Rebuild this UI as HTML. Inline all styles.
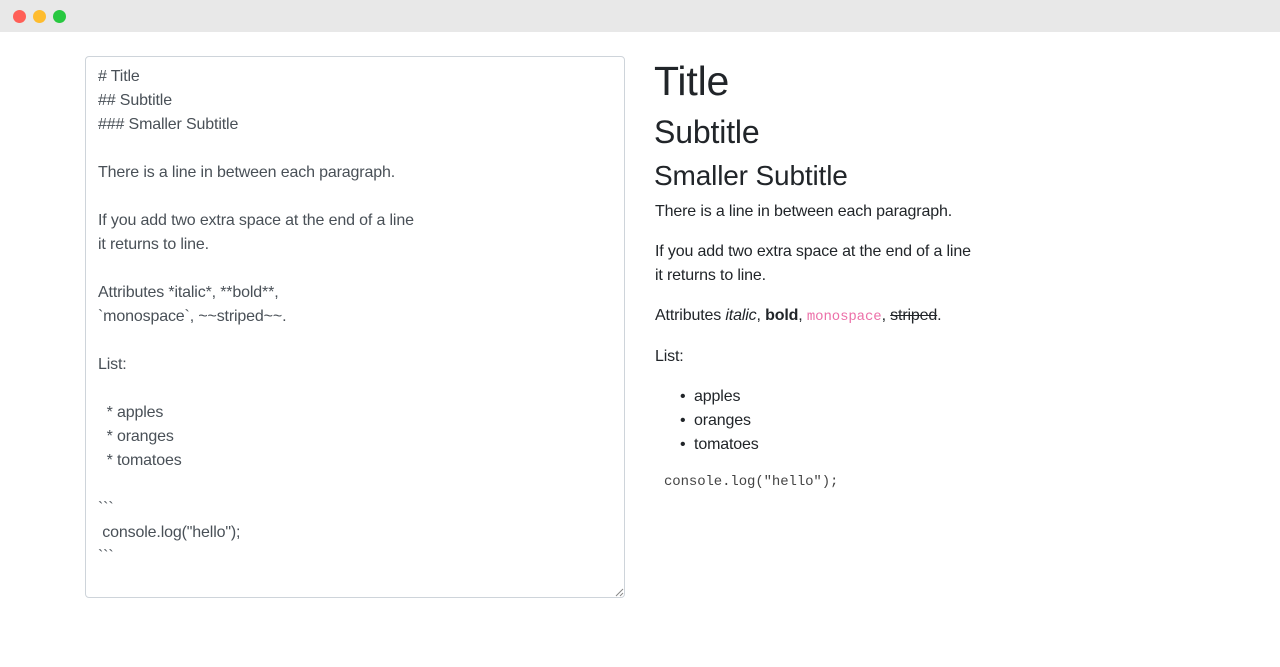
<!DOCTYPE html>
<html><head><meta charset="utf-8"><style>
body{margin:0;width:1280px;height:667px;background:#fff;font-family:"Liberation Sans",sans-serif;position:relative;overflow:hidden}
.bar{position:absolute;left:0;top:0;width:1280px;height:32px;background:#e8e8e8}
.dot{position:absolute;top:10px;width:13px;height:13px;border-radius:50%}
.ta{position:absolute;left:85px;top:56px;width:538px;height:540px;border:1px solid #ced4da;border-radius:4px}
.l{position:absolute;font-size:16px;line-height:24px;color:#495057;white-space:pre;letter-spacing:-0.15px}
.r{position:absolute;font-size:16px;line-height:24px;color:#212529;white-space:pre;letter-spacing:-0.15px}
.m{font-family:"Liberation Mono",monospace;font-size:14px;letter-spacing:-0.1px}
</style></head><body>
<div class="bar"></div>
<div class="dot" style="left:13px;background:#ff5f57"></div>
<div class="dot" style="left:33px;background:#febc2e"></div>
<div class="dot" style="left:53px;background:#28c840"></div>
<div class="ta"></div>
<svg style="position:absolute;left:615px;top:588px" width="9" height="9"><path d="M8 1L1 8M8 5L5 8" stroke="#888" stroke-width="1"/></svg>
<div class="l" style="left:98px;top:65px"># Title</div>
<div class="l" style="left:98px;top:89px">## Subtitle</div>
<div class="l" style="left:98px;top:113px">### Smaller Subtitle</div>
<div class="l" style="left:98px;top:161px">There is a line in between each paragraph.</div>
<div class="l" style="left:98px;top:209px">If you add two extra space at the end of a line</div>
<div class="l" style="left:98px;top:233px">it returns to line.</div>
<div class="l" style="left:98px;top:281px">Attributes *italic*, **bold**,</div>
<div class="l" style="left:98px;top:305px">&#96;monospace&#96;, ~~striped~~.</div>
<div class="l" style="left:98px;top:353px">List:</div>
<div class="l" style="left:98px;top:401px">  * apples</div>
<div class="l" style="left:98px;top:425px">  * oranges</div>
<div class="l" style="left:98px;top:449px">  * tomatoes</div>
<div class="l" style="left:98px;top:497px">&#96;&#96;&#96;</div>
<div class="l" style="left:98px;top:521px"> console.log("hello");</div>
<div class="l" style="left:98px;top:545px">&#96;&#96;&#96;</div>

<div class="r" style="left:654px;top:57px;font-size:41px;line-height:48px">Title</div>
<div class="r" style="left:654px;top:112px;font-size:32px;line-height:40px">Subtitle</div>
<div class="r" style="left:654px;top:159px;font-size:28px;line-height:34px">Smaller Subtitle</div>
<div class="r" style="left:655px;top:200px">There is a line in between each paragraph.</div>
<div class="r" style="left:655px;top:240px">If you add two extra space at the end of a line</div>
<div class="r" style="left:655px;top:264px">it returns to line.</div>
<div class="r" style="left:655px;top:304px">Attributes <i>italic</i>, <b>bold</b>, <span class="m" style="color:#ec6fa8">monospace</span>, <s>striped</s>.</div>
<div class="r" style="left:655px;top:345px">List:</div>
<div class="r" style="left:680px;top:385px">•  apples</div>
<div class="r" style="left:680px;top:409px">•  oranges</div>
<div class="r" style="left:680px;top:433px">•  tomatoes</div>
<div class="r m" style="left:664px;top:470px;color:#444">console.log("hello");</div>
</body></html>
